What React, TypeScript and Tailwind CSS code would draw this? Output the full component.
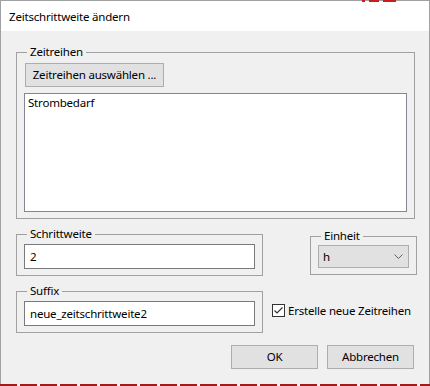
import React from 'react';

const font = { fontFamily: '"Segoe UI", "Noto Sans", sans-serif' };

function Group({ label, className, children }: { label: string; className: string; children: React.ReactNode }) {
  return (
    <fieldset className={`border border-[#a0a0a0] ${className}`}>
      <legend className="ml-[3px] px-[3px] leading-[16px] text-black">{label}</legend>
      {children}
    </fieldset>
  );
}

function Chevron() {
  return (
    <svg width="9" height="5" viewBox="0 0 9 5" className="shrink-0">
      <path d="M0.5 0.5 L4.5 4.5 L8.5 0.5" fill="none" stroke="#606060" strokeWidth="1" />
    </svg>
  );
}

function CheckBox() {
  return (
    <span className="flex h-[13px] w-[13px] items-center justify-center border border-[#333333] bg-white">
      <svg width="11" height="11" viewBox="0 0 11 11">
        <path d="M1.5 5.5 L4 8 L9.5 2.5" fill="none" stroke="#333333" strokeWidth="1.2" />
      </svg>
    </span>
  );
}

export default function App() {
  return (
    <div className="relative h-[386px] w-[430px] overflow-hidden bg-white text-[11.5px] tracking-[-0.2px] text-black" style={font}>
      {/* Dialogfenster */}
      <div className="w-[430px] border-x border-[#a0a0a0]">
        {/* Titelleiste */}
        <div className="flex h-[31px] items-center border-t border-[#a0a0a0] bg-white pl-[8px] pt-[1px]">
          Zeitschrittweite ändern
        </div>

        {/* Inhalt */}
        <div className="h-[353px] bg-[#f0f0f0] pl-[15px] pt-[13px]">
          <Group label="Zeitreihen" className="w-[397px] px-[7px] pb-[6px] pt-[3px]">
            <button className="ml-px flex h-[24px] w-[139px] items-center justify-center border border-[#adadad] bg-[#e1e1e1]">
              Zeitreihen auswählen ...
            </button>
            <div className="mt-[6px] h-[119px] w-[383px] border border-[#828790] bg-white px-[3px] pt-px leading-[16px]">
              Strombedarf
            </div>
          </Group>

          <div className="mt-[7px] flex items-start">
            <Group label="Schrittweite" className="w-[245px] px-[7px] pb-[6px] pt-[2px]">
              <div className="flex h-[25px] w-[231px] items-center border border-[#7a7a7a] bg-white px-[5px]">2</div>
            </Group>
            <Group label="Einheit" className="ml-[47px] mt-[2px] w-[106px] px-[7px] pb-[6px] pt-px">
              <div className="flex h-[23px] w-[91px] items-center justify-between border border-[#adadad] bg-[#e1e1e1] pl-[4px] pr-[5px]">
                <span>h</span>
                <Chevron />
              </div>
            </Group>
          </div>

          <div className="mt-[7px] flex items-start">
            <Group label="Suffix" className="w-[245px] px-[7px] pb-[6px] pt-[2px]">
              <div className="flex h-[25px] w-[231px] items-center border border-[#7a7a7a] bg-white px-[5px]">
                neue_zeitschrittweite2
              </div>
            </Group>
            <label className="ml-[9px] mt-[21px] flex items-center gap-[3px] leading-[13px]">
              <CheckBox />
              <span>Erstelle neue Zeitreihen</span>
            </label>
          </div>

          <div className="mt-[12px] flex gap-[9px] pl-[215px]">
            <button className="flex h-[24px] w-[87px] items-center justify-center border border-[#adadad] bg-[#e1e1e1]">OK</button>
            <button className="flex h-[24px] w-[87px] items-center justify-center border border-[#adadad] bg-[#e1e1e1]">
              Abbrechen
            </button>
          </div>
        </div>
      </div>

      {/* rote Linie des Hintergrundfensters */}
      <div className="h-[2px] w-full bg-[repeating-linear-gradient(90deg,#a31a1a_0_17px,#f0f0f0_17px_20px)]" />

      {/* Reste eines Fensters dahinter */}
      <div className="absolute left-[362px] top-0 flex gap-[4px]">
        <span className="h-[2px] w-[3px] bg-[#c81e1e]" />
        <span className="h-[2px] w-[10px] bg-[#c81e1e]" />
        <span className="h-[2px] w-[13px] bg-[#c81e1e]" />
      </div>
    </div>
  );
}
